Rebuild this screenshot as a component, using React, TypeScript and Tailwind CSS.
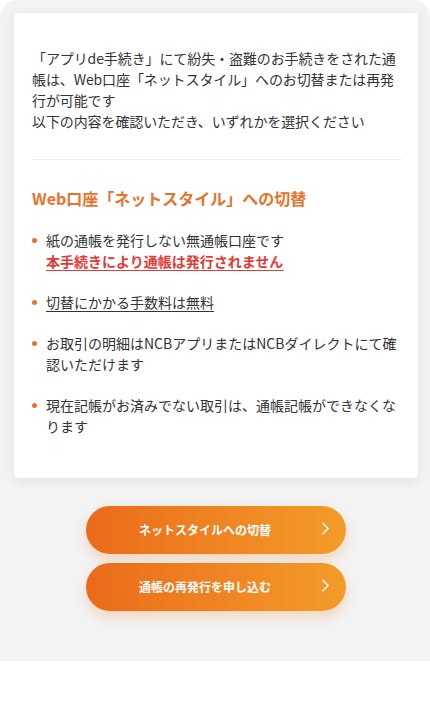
import { ChevronRight } from "lucide-react";

const font = {
  fontFamily: '"Noto Sans CJK JP", "Noto Sans", sans-serif',
};

const buttons = ["ネットスタイルへの切替", "通帳の再発行を申し込む"];

function Item({ children }: { children: React.ReactNode }) {
  return (
    <li className="flex gap-[9px]">
      <span className="mt-[8px] h-[5px] w-[5px] shrink-0 rounded-full bg-[#e8722a]" />
      <div className="flex-1">{children}</div>
    </li>
  );
}

export default function App() {
  return (
    <div className="min-h-[728px] bg-white text-[#333333]" style={font}>
      <div className="rounded-t-[18px] bg-[#f3f3f3] pl-[14px] pr-[12px] pt-[13px] pb-[50px]">
        {/* card */}
        <div className="rounded-[3px] bg-white pl-[18px] pr-[14px] pt-[35px] pb-[41px] shadow-[0_2px_12px_rgba(0,0,0,0.08)]">
          <p className="text-[14px] leading-[21px] tracking-[-0.1px]">
            「アプリde手続き」にて紛失・盗難のお手続きをされた通帳は、Web口座「ネットスタイル」へのお切替または再発行が可能です
            <br />
            以下の内容を確認いただき、いずれかを選択ください
          </p>

          <div className="mt-[27px] mr-[2px] h-px bg-[#efefef]" />

          <h2 className="mt-[26px] text-[16px] font-bold leading-[24px] text-[#e8722a]">
            Web口座「ネットスタイル」への切替
          </h2>

          <ul className="mt-[20px] flex flex-col gap-[20px] pr-[6px] text-[14px] leading-[21px]">
            <Item>
              紙の通帳を発行しない無通帳口座です
              <br />
              <span className="font-bold text-[#e53935] underline underline-offset-[3px]">
                本手続きにより通帳は発行されません
              </span>
            </Item>
            <Item>
              <span className="underline underline-offset-[3px]">切替にかかる手数料は無料</span>
            </Item>
            <Item>お取引の明細はNCBアプリまたはNCBダイレクトにて確認いただけます</Item>
            <Item>現在記帳がお済みでない取引は、通帳記帳ができなくなります</Item>
          </ul>
        </div>

        {/* actions */}
        <div className="mt-[28px] flex flex-col items-center gap-[9px]">
          {buttons.map((label) => (
            <button
              key={label}
              className="relative flex h-[48px] w-[260px] items-center justify-center rounded-full bg-gradient-to-r from-[#ea6a1a] to-[#f39c2a] pr-[22px] text-[12px] font-bold text-white shadow-[0_6px_12px_rgba(240,130,40,0.25)]"
            >
              {label}
              <ChevronRight
                className="absolute right-[10px] top-[12px]"
                size={21}
                strokeWidth={1.6}
              />
            </button>
          ))}
        </div>
      </div>
    </div>
  );
}
